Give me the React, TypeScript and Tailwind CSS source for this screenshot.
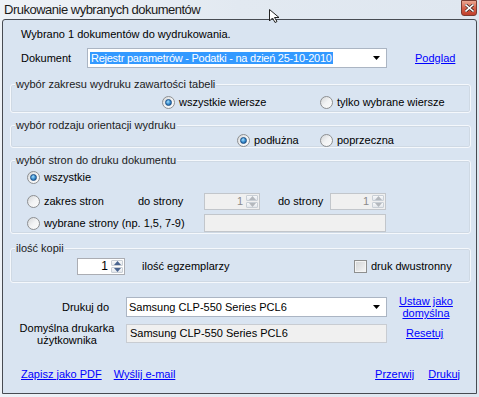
import React from 'react'

const font = { fontFamily: '"Liberation Sans", Arial, sans-serif' }

function Radio({ checked }: { checked?: boolean }) {
    return (
        <span className="flex h-[13px] w-[13px] shrink-0 items-center justify-center rounded-full border border-[#8d8f91] bg-gradient-to-br from-[#d4d6d8] via-[#f2f3f4] to-[#fbfbfb]">
            {checked && (
                <span className="h-[7px] w-[7px] rounded-full border border-[#1b4f86] bg-radial-[at_40%_35%] from-[#a9e1ff] via-[#3a8fd0] to-[#164e8a]" />
            )}
        </span>
    )
}

function Option({ checked, label, className = '' }: { checked?: boolean; label: string; className?: string }) {
    return (
        <div className={`flex items-center gap-[4px] ${className}`}>
            <Radio checked={checked} />
            <span>{label}</span>
        </div>
    )
}

function Arrow({ up, color }: { up?: boolean; color: string }) {
    return (
        <svg width="7" height="4" viewBox="0 0 7 4">
            {up ? <path d="M0 4 L3.5 0 L7 4 Z" fill={color} /> : <path d="M0 0 L7 0 L3.5 4 Z" fill={color} />}
        </svg>
    )
}

function Spinner({ disabled, className = '' }: { disabled?: boolean; className?: string }) {
    const arrow = disabled ? '#b4b8bd' : '#4a6590'
    return (
        <div
            className={`flex border ${disabled ? 'border-[#c2c6cb] bg-[#f0f0f0] text-[#8a8a8a]' : 'border-[#abadb3] bg-white text-black'} ${className}`}
        >
            <span className="flex-1 pr-[2px] text-right leading-[15px]">1</span>
            <div className="flex w-[14px] flex-col gap-px p-px">
                <div className="flex flex-1 items-center justify-center rounded-[1px] border border-[#c9cfd6] bg-gradient-to-b from-[#f8f9fa] to-[#e3e7ec]">
                    <Arrow up color={arrow} />
                </div>
                <div className="flex flex-1 items-center justify-center rounded-[1px] border border-[#c9cfd6] bg-gradient-to-b from-[#f8f9fa] to-[#e3e7ec]">
                    <Arrow color={arrow} />
                </div>
            </div>
        </div>
    )
}

function Combo({ children, className = '' }: { children: React.ReactNode; className?: string }) {
    return (
        <div className={`flex h-[20px] items-center border border-[#abb5c3] bg-white pl-[2px] pr-[6px] ${className}`}>
            <div className="flex-1">{children}</div>
            <Arrow color="#000" />
        </div>
    )
}

function Group({ title, className = '', children }: { title: string; className?: string; children: React.ReactNode }) {
    return (
        <div className={`ml-[7px] w-[461px] rounded-[3px] border border-[#f5f8fc] shadow-[inset_0_0_0_1px_#cfd9e4] ${className}`}>
            <div className="-mt-[7px] ml-[4px] w-fit bg-[#d9e4f1] px-[1px] leading-[13px] text-[#1b1b1b]">{title}</div>
            {children}
        </div>
    )
}

const link = 'text-[#0000ff] underline'

export default function App() {
    return (
        <div
            className="relative h-[397px] w-[479px] overflow-hidden bg-gradient-to-r from-[#eef2f7] via-[#e2e9f1] to-[#dfe7f0] text-[11px] text-black"
            style={font}
        >
            {/* Title bar */}
            <div className="flex h-[19px] items-start justify-between">
                <span className="ml-[4px] mt-[1px] text-[13px] leading-[17px] tracking-[-0.5px] text-[#1a1a1a]">
                    Drukowanie wybranych dokumentów
                </span>
                <div className="mr-[2px] flex h-[16px] w-[16px] items-center justify-center rounded-b-[3px] border border-[#7a3a30] bg-gradient-to-b from-[#eba792] via-[#d6604a] to-[#c0402c]">
                    <svg width="9" height="8" viewBox="0 0 9 8">
                        <path d="M1 1 L8 7 M8 1 L1 7" stroke="#3b2320" strokeWidth="3" strokeLinecap="square" />
                        <path d="M1 1 L8 7 M8 1 L1 7" stroke="#ffffff" strokeWidth="1.6" strokeLinecap="square" />
                    </svg>
                </div>
            </div>

            {/* mouse pointer in the glass */}
            <svg className="absolute left-[269px] top-[9px]" width="12" height="14" viewBox="0 0 12 14">
                <path d="M0.5 0.5 L0.5 12 L3.5 9 L6 13.5 L8 12.5 L5.5 8.5 L10 8.5 Z" fill="#fff" stroke="#222" strokeWidth="1" />
            </svg>

            {/* Window client */}
            <div className="ml-[2px] h-[375px] w-[475px] rounded-t-[3px] border border-[#474b52] bg-[#d9e4f1]">
                <div className="ml-[18px] mt-[7px] h-[14px] leading-[14px]">Wybrano 1 dokumentów do wydrukowania.</div>

                <div className="mt-[7px] flex h-[20px] items-center pl-[18px]">
                    <span className="w-[66px]">Dokument</span>
                    <Combo className="w-[300px]">
                        <span className="bg-[#3399ff] px-px tracking-[-0.25px] text-white">
                            Rejestr parametrów - Podatki - na dzień 25-10-2010
                        </span>
                    </Combo>
                    <span className={`ml-[28px] ${link}`}>Podglad</span>
                </div>

                <Group title="wybór zakresu wydruku zawartości tabeli" className="mt-[16px] h-[29px]">
                    <div className="mt-[4px] flex h-[14px] items-center pl-[151px]">
                        <Option checked label="wszystkie wiersze" className="w-[158px]" />
                        <Option label="tylko wybrane wiersze" />
                    </div>
                </Group>

                <Group title="wybór rodzaju orientacji wydruku" className="mt-[12px] h-[23px]">
                    <div className="mt-px flex h-[14px] items-center pl-[226px]">
                        <Option checked label="podłużna" className="w-[83px]" />
                        <Option label="poprzeczna" />
                    </div>
                </Group>

                <Group title="wybór stron do druku dokumentu" className="mt-[12px] h-[74px]">
                    <div className="pl-[16px]">
                        <Option checked label="wszystkie" className="mt-[3px] h-[14px]" />
                        <div className="mt-[9px] flex h-[17px] items-center">
                            <Option label="zakres stron" className="w-[111px]" />
                            <span className="w-[66px]">do strony</span>
                            <Spinner disabled className="h-[17px] w-[56px]" />
                            <span className="ml-[18px] w-[52px]">do strony</span>
                            <Spinner disabled className="h-[17px] w-[56px]" />
                        </div>
                        <div className="mt-[4px] flex h-[18px] items-center">
                            <Option label="wybrane strony (np. 1,5, 7-9)" className="w-[177px]" />
                            <div className="h-[18px] w-[182px] border border-[#c2c6cb] bg-[#f0f0f0]" />
                        </div>
                    </div>
                </Group>

                <Group title="ilość kopii" className="mt-[14px] h-[35px]">
                    <div className="mt-[3px] flex h-[17px] items-center pl-[66px]">
                        <Spinner className="h-[17px] w-[48px] text-[12px]" />
                        <span className="ml-[17px] w-[212px]">ilość egzemplarzy</span>
                        <span className="h-[13px] w-[13px] border border-[#8e8f8f] bg-gradient-to-br from-[#d2d4d6] to-[#f7f7f7] shadow-[inset_0_0_0_1px_#f4f4f4]" />
                        <span className="ml-[4px]">druk dwustronny</span>
                    </div>
                </Group>

                <div className="mt-[14px] flex h-[20px] items-center">
                    <span className="ml-[59px] w-[64px]">Drukuj do</span>
                    <Combo className="w-[261px]">Samsung CLP-550 Series PCL6</Combo>
                    <span className={`ml-[10px] w-[58px] text-center leading-[12px] ${link}`}>
                        Ustaw jako
                        <br />
                        domyślna
                    </span>
                </div>

                <div className="mt-[7px] flex h-[19px] items-center">
                    <span className="ml-[15px] w-[108px] pr-[10px] text-center leading-[12px]">
                        Domyślna drukarka
                        <br />
                        użytkownika
                    </span>
                    <div className="flex h-[19px] w-[261px] items-center border border-[#c8ccd2] bg-[#f0f0f0] pl-[3px]">
                        Samsung CLP-550 Series PCL6
                    </div>
                    <span className={`ml-[19px] ${link}`}>Resetuj</span>
                </div>

                <div className="mt-[24px] flex h-[14px] items-center pl-[18px] pr-[16px]">
                    <span className={link}>Zapisz jako PDF</span>
                    <span className={`ml-[12px] ${link}`}>Wyślij e-mail</span>
                    <span className={`ml-auto ${link}`}>Przerwij</span>
                    <span className={`ml-[14px] ${link}`}>Drukuj</span>
                </div>
            </div>
        </div>
    )
}
